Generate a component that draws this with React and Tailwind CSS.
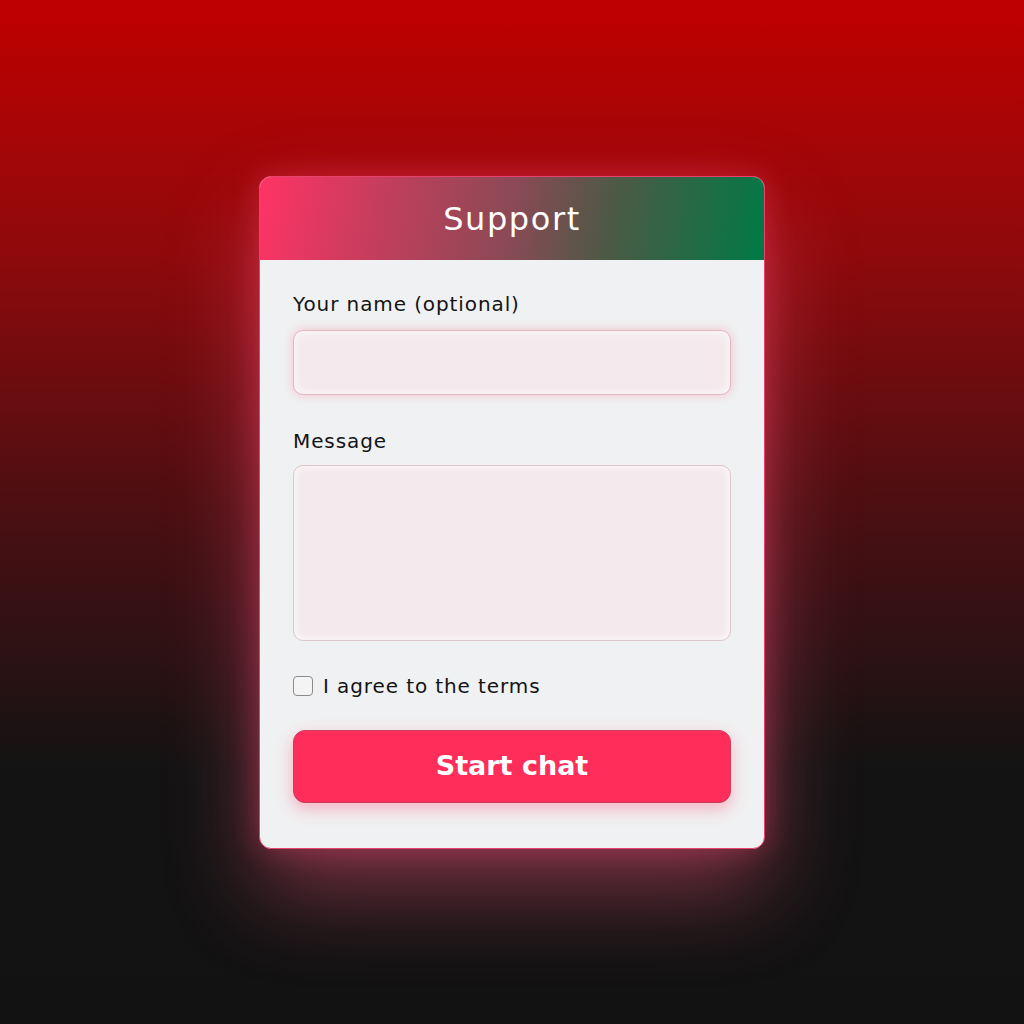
export default function App() {
  return (
    <div
      className="w-full h-[1024px] flex items-start justify-center bg-[linear-gradient(180deg,#c00000_0%,#8e0a0c_25%,#4a0f12_50%,#2a1214_65%,#131313_75%,#121212_100%)]"
      style={{ fontFamily: '"DejaVu Sans", Inter, sans-serif' }}
    >
      <div className="mt-[176px] w-[506px] rounded-[12px] border-[1.5px] border-[#e6446e] bg-[#f0f1f2] overflow-hidden shadow-[0_40px_90px_rgba(255,90,130,0.45),0_0_30px_rgba(255,60,110,0.35)]">
        <div className="h-[83px] flex items-center justify-center bg-[linear-gradient(100deg,#ff3366_0%,#c23e5c_25%,#8a4a55_50%,#4a5a45_70%,#007a45_100%)]">
          <h1 className="text-[32px] text-white tracking-[0.05em]">Support</h1>
        </div>
        <div className="px-[33px] pt-[30px] pb-[45px] flex flex-col">
          <label className="text-[20px] tracking-[0.045em] text-[#141414] leading-[28px]">Your name (optional)</label>
          <input
            type="text"
            className="mt-[12px] h-[65px] w-full rounded-[10px] border border-[#e2b8c0] bg-[#f4eaee] outline-none shadow-[0_0_10px_rgba(255,80,120,0.3),inset_0_0_8px_rgba(255,255,255,0.9)]"
          />
          <label className="mt-[32px] text-[20px] tracking-[0.045em] text-[#141414] leading-[28px]">Message</label>
          <textarea
            className="mt-[10px] h-[176px] w-full resize-none rounded-[10px] border border-[#dcc8c8] bg-[#f4eaee] outline-none shadow-[inset_0_0_8px_rgba(255,255,255,0.9)]"
          />
          <label className="mt-[31px] flex items-center gap-[10px] text-[20px] tracking-[0.045em] text-[#141414] leading-[28px]">
            <span className="w-[20px] h-[20px] rounded-[4px] border-[1.5px] border-[#8a8a8a] bg-[#f4f4f4]" />
            I agree to the terms
          </label>
          <button className="mt-[30px] h-[73px] w-full rounded-[12px] border border-[#c8405e] bg-[#ff2d5a] text-white text-[27px] font-bold shadow-[0_6px_16px_rgba(255,60,100,0.35)]">
            Start chat
          </button>
        </div>
      </div>
    </div>
  );
}
